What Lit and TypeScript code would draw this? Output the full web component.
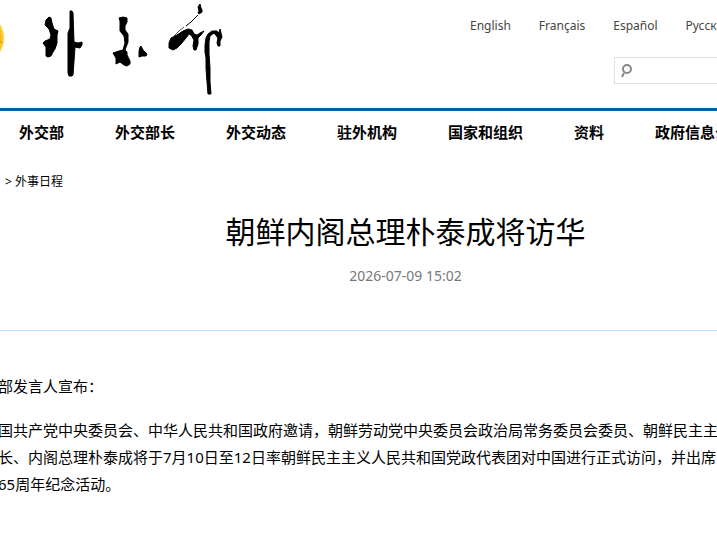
import { LitElement, html, css } from "lit";
import { customElement } from "lit/decorators.js";

const LANGUAGES = ["English", "Français", "Español", "Русский"];
const SECTIONS = ["外交部", "外交部长", "外交动态", "驻外机构", "国家和组织", "资料", "政府信息公开"];
const STATEMENT = [
  "国共产党中央委员会、中华人民共和国政府邀请\uff0c朝鲜劳动党中央委员会政治局常务委员会委员、朝鲜民主主",
  "长、内阁总理朴泰成将于7月10日至12日率朝鲜民主主义人民共和国党政代表团对中国进行正式访问\uff0c并出席",
  "65周年纪念活动。",
];

@customElement("site-logo")
class SiteLogo extends LitElement {
  static styles = css`
    :host { display: block; }
    .logo { display: block; }
  `;
  render() {
    return html`<svg class="logo" width="230" height="108" viewBox="0 0 230 108" role="img" aria-label="外交部">
      <defs>
        <radialGradient id="gold" cx="-22" cy="38" r="27" gradientUnits="userSpaceOnUse">
          <stop offset="0.8" stop-color="#f3b414" />
          <stop offset="0.93" stop-color="#ffd22e" />
          <stop offset="1" stop-color="#f6bd2c" />
        </radialGradient>
      </defs>
      <circle cx="-22" cy="38" r="26" fill="url(#gold)" />
      <path d="M0 41L3 43" stroke="#d88a10" />
      <g fill="#000" stroke="#000" stroke-linejoin="round">
        <path d="M49 17L51 18L52 23L54 29L58 31L57 35L57 43L55 49L53 52L51 56L48 57L46 56L46 47L43 43L45 41L50 39L51 35L49 29L45 25L46 20Z" />
        <path d="M70 11L72 11L73 13L74 42L78 43L82 42L82 45L80 48L75 47L73 75L72 76L69 76L68 73L68 62L68 33L70 28Z" />
        <path d="M119 18L123 17L127 18L127 22L125 26L125 30L128 34L128 42L125 50L127 52L127 55L130 61L130 64L127 66L124 65L120 62L116 64L116 58L113 53L119 51L123 50L125 43L124 36L120 31L120 21Z" />
        <path d="M141 46L143 50L147 54L146 56L142 56L139 57L139 51L140 47Z" />
        <path d="M200 4L201 8L202 10L202 12L199 14L198 13L199 11L198 7Z" />
        <path d="M198 15L191 22L186 26" fill="none" />
        <path d="M184 27L179 31L174 36" fill="none" stroke="#555" />
        <path d="M169 43L171 38L177 35L183 31L188 29L192 30L194 34L197 35L200 33L204 31L201 35L198 38L198 44L196 50L194 50L193 46L194 40L191 35L189 34L186 38L181 44L177 48L173 50L169 48Z" />
        <path d="M205 45L206 38L208 34L212 31L217 31L219 33L220 29L221 33L222 37L220 41L220 46L218 46L217 43L218 38L214 33L210 36L209 42L209 54L210 68L210 82L211 94L208 94L207 82L206 68L206 58L205 52Z" />
      </g>
    </svg>`;
  }
}

@customElement("site-search")
class SiteSearch extends LitElement {
  static styles = css`
    :host { display: block; }
    .box {
      display: flex;
      align-items: center;
      box-sizing: border-box;
      height: 27px;
      padding-left: 6px;
      border: 1px solid #e0e0e0;
      border-right: 0;
    }
    .field {
      flex: 1;
      min-width: 0;
      border: 0;
      outline: 0;
      background: none;
      font: 12px "Noto Sans", "Noto Sans CJK SC", sans-serif;
    }
  `;
  render() {
    return html`<form class="box" role="search">
      <svg width="12" height="16" viewBox="0 0 12 16" aria-hidden="true">
        <circle cx="6" cy="6" r="4" fill="none" stroke="#888" stroke-width="2" />
        <path d="M3 10L1 14" stroke="#888" stroke-width="2" fill="none" />
      </svg>
      <input class="field" type="search" aria-label="搜索" />
    </form>`;
  }
}

@customElement("app-root")
class AppRoot extends LitElement {
  static styles = css`
    :host {
      display: block;
      overflow: hidden;
      background: #fff;
      color: #000;
      font-family: "Noto Sans", "Noto Sans CJK SC", sans-serif;
    }
    a { color: inherit; text-decoration: none; }
    .header {
      display: flex;
      justify-content: space-between;
      border-bottom: 3px solid #0560a6;
    }
    .tools { width: 247px; padding-top: 17px; }
    .languages {
      display: flex;
      gap: 28px;
      font-size: 12px;
      line-height: 18px;
      color: #444;
      white-space: nowrap;
    }
    .search { margin: 22px 0 0 144px; }
    .nav {
      display: flex;
      gap: 51px;
      padding: 10px 0 0 19px;
      font-size: 15px;
      font-weight: 700;
      line-height: 22px;
      white-space: nowrap;
    }
    .crumbs {
      padding: 30px 0 0 5px;
      font-size: 12px;
      line-height: 18px;
    }
    .heading {
      padding: 19px 0 44px 94px;
      border-bottom: 1px solid #b9dcff;
      text-align: center;
    }
    .title { margin: 0; font-size: 30px; font-weight: 400; line-height: 44px; }
    .date { display: block; margin-top: 12px; font-size: 14px; line-height: 20px; color: #777; }
    .body {
      margin: 42px 0 0 -2px;
      font-size: 15px;
      line-height: 27px;
      white-space: nowrap;
    }
    .para { margin: 0 0 17px; }
    .line { display: block; }
  `;
  render() {
    return html`
      <header class="header">
        <site-logo></site-logo>
        <div class="tools">
          <div class="languages">${LANGUAGES.map((name) => html`<a href="#">${name}</a>`)}</div>
          <site-search class="search"></site-search>
        </div>
      </header>
      <nav class="nav" lang="zh-CN">${SECTIONS.map((name) => html`<a href="#">${name}</a>`)}</nav>
      <main lang="zh-CN">
        <div class="crumbs">&gt; <a href="#">外事日程</a></div>
        <div class="heading">
          <h1 class="title">朝鲜内阁总理朴泰成将访华</h1>
          <time class="date" datetime="2026-07-09T15:02">2026-07-09 15:02</time>
        </div>
        <article class="body">
          <p class="para">部发言人宣布${"\uff1a"}</p>
          <p class="para">${STATEMENT.map((line) => html`<span class="line">${line}</span>`)}</p>
        </article>
      </main>
    `;
  }
}
